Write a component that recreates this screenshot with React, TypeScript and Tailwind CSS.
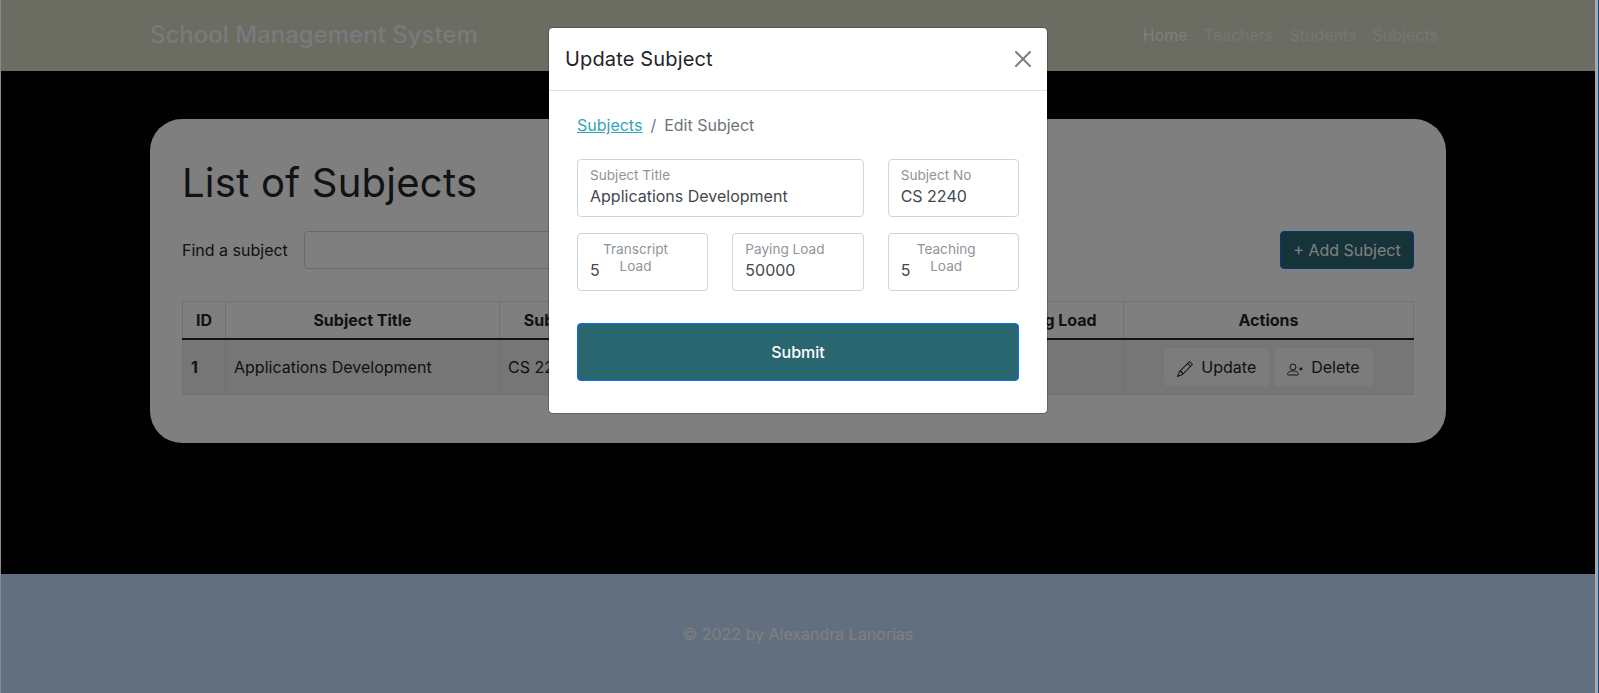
import { BsPencil } from 'react-icons/bs'

function Field({ label, value, wrapped }: { label: string; value: string; wrapped?: boolean }) {
  return (
    <div className="relative h-[58px] rounded border border-[#ced4da] bg-white">
      {wrapped ? (
        <span className="absolute left-[2px] top-[7px] w-[111px] px-5 text-center text-[13.6px] leading-[17px] text-[#90949a]">
          {label}
        </span>
      ) : (
        <span className="absolute left-3 top-[7px] text-[13.6px] leading-[17px] text-[#90949a]">{label}</span>
      )}
      <span className="absolute left-3 top-6 text-base leading-6 text-[#43484d]">{value}</span>
    </div>
  )
}

function ActionButton({ icon, label }: { icon: React.ReactNode; label: string }) {
  return (
    <button className="flex h-[38px] items-center gap-2 rounded border border-[#f8f9fa] bg-[#f8f9fa] px-3 text-base text-[#212529]">
      {icon}
      {label}
    </button>
  )
}

function PersonXIcon() {
  return (
    <svg viewBox="0 0 16 16" className="mt-1 h-4 w-4" fill="none" stroke="currentColor" strokeWidth="1">
      <circle cx="6" cy="6" r="3" />
      <path d="M1.5 14h9c.6 0 1-.4 1-1 0-1-1.5-3-5.5-3S.5 12 .5 13c0 .6.4 1 1 1z" />
      <path d="M12.6 6.6l2.6 2.6M15.2 6.6l-2.6 2.6" strokeWidth="1.2" />
    </svg>
  )
}

export default function App() {
  const cellClass = 'border border-[#dee2e6] px-2 font-bold'

  return (
    <div className="flex h-screen w-full overflow-hidden font-[Inter,sans-serif] text-[#212529]">
      <div className="w-px shrink-0 bg-[#8a8a8a]"></div>

      <div className="relative flex w-[1594px] shrink-0 flex-col">
        {/* Header */}
        <header className="h-[71px] shrink-0 bg-[#d6d8c4] pb-[2px]">
          <div className="mx-auto flex h-full w-[1296px] items-center justify-between">
            <span className="text-2xl font-medium text-[#f2f4f8]">School Management System</span>
            <nav className="flex gap-4 pr-2 text-base">
              <a className="text-white">Home</a>
              <a className="text-white/55">Teachers</a>
              <a className="text-white/55">Students</a>
              <a className="text-white/55">Subjects</a>
            </nav>
          </div>
        </header>

        {/* Main */}
        <main className="flex-1 bg-[#020205] pt-12">
          <section className="mx-auto h-[324px] w-[1296px] rounded-[32px] bg-white px-8 pt-10">
            <h1 className="text-[40px] leading-[48px] tracking-[0.25px]">List of Subjects</h1>
            <div className="mt-6 flex items-center justify-between">
              <div className="flex items-center gap-4">
                <label className="text-base">Find a subject</label>
                <div className="h-[38px] w-[400px] rounded border border-[#ced4da] bg-white"></div>
              </div>
              <button className="h-[38px] w-[134px] rounded border border-[#0d6efd] bg-[#2a6670] text-base text-white">
                + Add Subject
              </button>
            </div>

            <table className="mt-8 w-[1232px] table-fixed border-collapse text-base">
              <thead>
                <tr className="h-[37px] border-b-2 border-b-[#212529] text-center">
                  <th className={`${cellClass} w-[43px]`}>ID</th>
                  <th className={`${cellClass} w-[274px]`}>Subject Title</th>
                  <th className={`${cellClass} w-[134px]`}>Subject No</th>
                  <th className={`${cellClass} w-[161px]`}>Transcript Load</th>
                  <th className={`${cellClass} w-[161px]`}>Paying Load</th>
                  <th className={`${cellClass} w-[168px]`}>Teaching Load</th>
                  <th className={cellClass}>Actions</th>
                </tr>
              </thead>
              <tbody>
                <tr className="h-[56px] bg-[#ededed]">
                  <td className={cellClass}>1</td>
                  <td className="border border-[#dee2e6] px-2">Applications Development</td>
                  <td className="border border-[#dee2e6] px-2">CS 2240</td>
                  <td className="border border-[#dee2e6] px-2">5</td>
                  <td className="border border-[#dee2e6] px-2">50000</td>
                  <td className="border border-[#dee2e6] px-2">5</td>
                  <td className="border border-[#dee2e6] px-2">
                    <div className="flex justify-center gap-[5px]">
                      <ActionButton icon={<BsPencil size={16} className="mt-1" />} label="Update" />
                      <ActionButton icon={<PersonXIcon />} label="Delete" />
                    </div>
                  </td>
                </tr>
              </tbody>
            </table>
          </section>
        </main>

        {/* Footer */}
        <footer className="flex h-[119px] shrink-0 justify-center bg-[#c4deff] pt-[48px]">
          <p className="text-base leading-6 text-white">© 2022 by Alexandra Lanorias</p>
        </footer>

        {/* Backdrop + modal */}
        <div className="absolute inset-0 flex items-start justify-center bg-black/50 pt-[27px]">
          <div className="h-[387px] w-[500px] rounded-[5px] border border-black/20 bg-white bg-clip-padding">
            <div className="flex h-[63px] items-center justify-between border-b border-[#dee2e6] px-4">
              <h5 className="text-xl leading-[30px] tracking-[0.15px]">Update Subject</h5>
              <svg viewBox="0 0 16 16" className="h-4 w-4 opacity-50">
                <path d="M.293.293a1 1 0 011.414 0L8 6.586 14.293.293a1 1 0 111.414 1.414L9.414 8l6.293 6.293a1 1 0 01-1.414 1.414L8 9.414l-6.293 6.293a1 1 0 01-1.414-1.414L6.586 8 .293 1.707a1 1 0 010-1.414z" />
              </svg>
            </div>
            <div className="px-7 pt-[22px]">
              <div className="flex text-base leading-6">
                <a className="text-[#32a6b6] underline">Subjects</a>
                <span className="px-2 text-[#6c757d]">/</span>
                <span className="text-[#6c757d]">Edit Subject</span>
              </div>
              <div className="mt-[22px] grid grid-cols-3 gap-x-6 gap-y-4">
                <div className="col-span-2">
                  <Field label="Subject Title" value="Applications Development" />
                </div>
                <Field label="Subject No" value="CS 2240" />
                <Field label="Transcript Load" value="5" wrapped />
                <Field label="Paying Load" value="50000" />
                <Field label="Teaching Load" value="5" wrapped />
              </div>
              <button className="mt-8 h-[58px] w-full rounded border border-[#0d6efd] bg-[#2a6670] text-base font-medium text-white">
                Submit
              </button>
            </div>
          </div>
        </div>
      </div>

      <div className="w-[3px] shrink-0 bg-[#a9a9a9]"></div>
      <div className="flex-1 bg-[#0f4c81]"></div>
    </div>
  )
}
